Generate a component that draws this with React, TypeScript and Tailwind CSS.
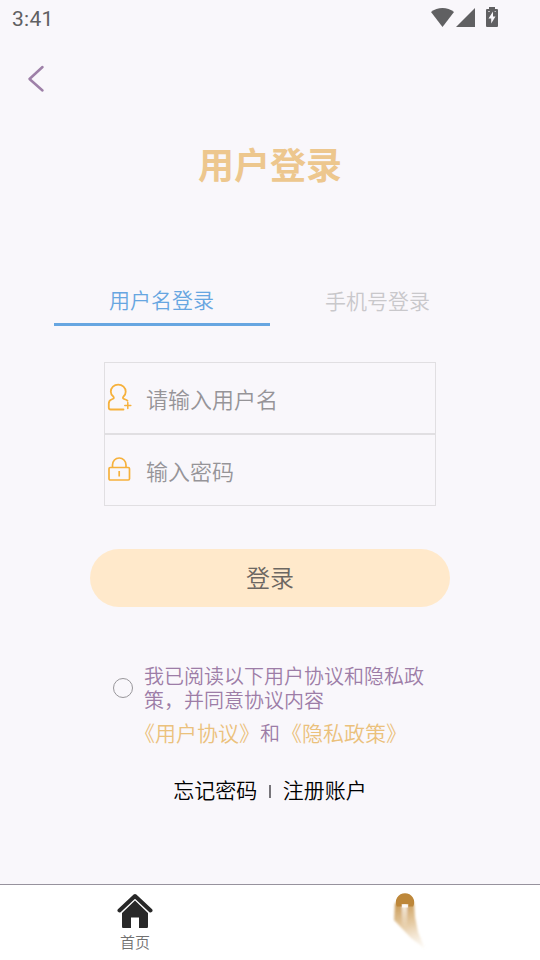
import React from "react";

function StatusBar() {
  return (
    <header className="flex h-9 items-center justify-between pr-[42px] pl-3 text-[#606062]">
      <span className="pt-0.5 font-['Roboto',sans-serif] text-[21px] leading-6 font-normal tracking-[0.3px]">3:41</span>
      <svg width="68" height="24" viewBox="430 6 68 24" fill="currentColor" aria-hidden="true">
        <path d="M431 12.1C437.5 6.5 447.500 6.500 454 12.100L442.500 27Z" />
        <path d="M475 8V27H456Z" />
        <path d="M489 7h6v2h2q1 0 1 1v16q0 1-1 1h-10q-1 0-1-1V10q0-1 1-1h2Z" />
        <path d="M493 11.500l-4.500 7h2.700v5l4.300-7h-2.500Z" fill="#f9f7fb" />
        <path d="M488 11.500h2M494.500 11.500h1.500" stroke="#f9f7fb" strokeWidth="1" opacity=".6" />
      </svg>
    </header>
  );
}

function UserIcon() {
  return (
    <svg width="26" height="30" viewBox="0 0 26 30" fill="none" stroke="#f6b13c" strokeWidth="1.8" strokeLinecap="round" strokeLinejoin="round">
      <path d="M16.500 26.500H3.500Q1.800 26.500 1.800 24.800V20.500Q1.800 17.500 4.500 16.500L6 15.800Q7.500 15 6.300 13.500Q3.800 11.500 3.800 8.700C3.800 4.500 7 1.600 11.200 1.600S18.700 4.500 18.700 8.700Q18.700 11.500 16.500 13.500Q15.200 15 16.800 15.800L18.500 16.500Q20 17 20.500 17.800" />
      <path d="M20.800 19.500v6M17.800 22.500h6" strokeWidth="1.500" />
    </svg>
  );
}

function LockIcon() {
  return (
    <svg width="26" height="30" viewBox="0 0 26 30" fill="none" stroke="#f6b13c" strokeWidth="1.700" strokeLinejoin="round">
      <rect x="2" y="12.500" width="20.500" height="12.500" rx="1.200" />
      <path d="M5.500 12.500V10C5.500 6 8.400 3 12.200 3S19 6 19 10V12.500M12.200 16v5.500" />
    </svg>
  );
}

function Field({ icon, label }: { icon: React.ReactNode; label: string }) {
  return (
    <label className="flex h-[72px] items-center border border-[#e1dfe2] pl-0.5">
      <span className="w-[39px] shrink-0">{icon}</span>
      <input
        aria-label={label}
        placeholder={label}
        className="h-9 w-60 bg-transparent text-[22px] text-[#969498] outline-none placeholder:text-[#969498]"
      />
    </label>
  );
}

function BottomNav() {
  return (
    <nav className="grid h-[76px] grid-cols-2 border-t border-[#97929d] bg-white">
      <div className="flex flex-col items-center pt-2">
        <svg width="36" height="36" viewBox="0 0 36 36" aria-hidden="true">
          <path d="M2.500 17.500L18 3L33.500 17.500" fill="none" stroke="#282828" strokeWidth="4" strokeLinecap="round" strokeLinejoin="round" />
          <path d="M18 7.500L31 20V33.500Q31 35 30 35H22V24.500H14V35H6Q5 35 5 33.500V20Z" fill="#282828" />
        </svg>
        <span className="mt-[3px] text-[15px] leading-5 text-[#717171]">首页</span>
      </div>
      <div className="flex justify-center pt-1">
        <svg width="70" height="66" viewBox="370 889 70 66" aria-hidden="true">
          <defs>
            <linearGradient id="trail" gradientUnits="userSpaceOnUse" x1="400" y1="904" x2="414" y2="951">
              <stop offset="0" stopColor="#c18b3c" stopOpacity=".85" />
              <stop offset=".45" stopColor="#d5a969" stopOpacity=".6" />
              <stop offset="1" stopColor="#e9cfaa" stopOpacity="0.1" />
            </linearGradient>
            <linearGradient id="gap" x1="0" y1="0" x2="0" y2="1">
              <stop offset="0" stopColor="#fff" stopOpacity=".85" />
              <stop offset="1" stopColor="#fff" stopOpacity="0" />
            </linearGradient>
            <filter id="soft" x="-20%" y="-20%" width="140%" height="140%"><feGaussianBlur stdDeviation="1.3" /></filter>
          </defs>
          <g filter="url(#soft)">
            <path d="M395 903H414L415 917L418 932L425 949L411 938L394 920Z" fill="url(#trail)" />
            <path d="M402 904H407V928H402Z" fill="url(#gap)" />
          </g>
          <path d="M396.800 906.500A9.200 9.200 0 1 1 413.200 906.500H408.500V904H401.500V906.500Z" fill="#bd873a" />
          <path d="M402 904.500H408V907.500H402Z" fill="#fff" opacity=".8" />
        </svg>
      </div>
    </nav>
  );
}

export default function App() {
  return (
    <div className="flex h-[960px] w-[540px] flex-col overflow-hidden bg-[#f9f7fb] font-['Noto_Sans_CJK_SC',sans-serif] font-[350]">
      <StatusBar />
      <button aria-label="返回" className="mt-7 ml-[26px] h-[30px] w-5">
        <svg width="20" height="30" viewBox="0 0 20 30" fill="none" stroke="#9e80a8" strokeWidth="2.500" strokeLinecap="round" strokeLinejoin="round">
          <path d="M16.500 3L3.500 15L16.500 26.500" />
        </svg>
      </button>
      <main className="flex flex-1 flex-col">
        <h1 className="mt-[44px] h-[50px] text-center text-[36px] leading-[50px] font-bold text-[#edc78e]">用户登录</h1>
        <div className="mx-[54px] mt-[88px] grid h-[50px] grid-cols-2 text-center text-[21px]">
          <button className="border-b-[3px] border-[#67a6e1] pr-px text-[#67a6e1]">用户名登录</button>
          <button className="pr-px pb-px text-[#c9c8cb]">手机号登录</button>
        </div>
        <form className="mx-[104px] mt-9">
          <Field icon={<UserIcon />} label="请输入用户名" />
          <Field icon={<LockIcon />} label="输入密码" />
        </form>
        <button className="mx-[90px] mt-[43px] h-[58px] rounded-full bg-[#ffe9cb] pb-0.5 text-[24px] text-[#6c6762]">登录</button>
        <div className="mt-[57px] ml-[113px] flex items-center">
          <span className="h-5 w-5 rounded-full border-[1.500px] border-[#98969a]" />
          <p className="ml-[11px] w-[284px] text-[20px] leading-6 text-[#9d7da7]">我已阅读以下用户协议和隐私政策，并同意协议内容</p>
        </div>
        <p className="mt-[7px] ml-[134px] flex h-[26px] text-[21px] leading-[26px] whitespace-nowrap text-[#ebc17c]">
          <a>《用户协议》</a><span className="mr-px pt-px text-[20px] text-[#9d7da7]">和</span><a>《隐私政策》</a>
        </p>
        <div className="mt-[29px] flex h-[30px] items-center justify-center text-[21px] leading-[30px] text-black">
          <a>忘记密码</a>
          <span className="mx-[12px] mt-1 h-[13px] w-[1.500px] bg-[#77757a]" />
          <a>注册账户</a>
        </div>
      </main>
      <BottomNav />
    </div>
  );
}
